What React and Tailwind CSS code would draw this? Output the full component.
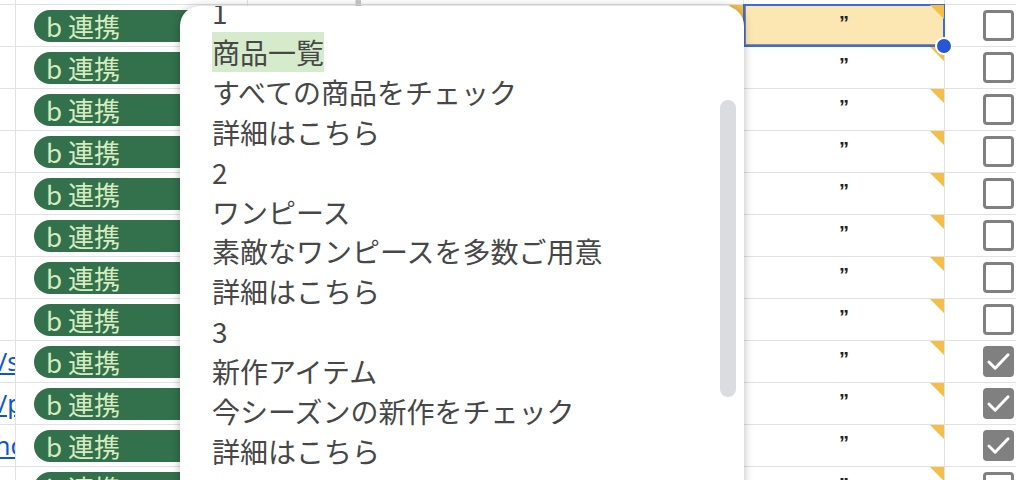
const ROW_COUNT = 12;
const CHECKED = [9, 10, 11];
const LINKS = { 9: ['/s', '-ml-[2px]'], 10: ['/p', '-ml-[2px]'], 11: ['nc', '-ml-[5px]'] };

const LINES = [
  '1',
  '商品一覧',
  'すべての商品をチェック',
  '詳細はこちら',
  '2',
  'ワンピース',
  '素敵なワンピースを多数ご用意',
  '詳細はこちら',
  '3',
  '新作アイテム',
  '今シーズンの新作をチェック',
  '詳細はこちら',
  '4',
];

function Corner() {
  return (
    <span className="absolute top-0 right-0 w-[14px] h-[14px] bg-[#f4be48] [clip-path:polygon(0_0,100%_0,100%_100%)]" />
  );
}

function Checkbox({ on }) {
  if (on) {
    return (
      <span className="flex items-center justify-center w-[31px] h-[31px] rounded-[4px] bg-[#808080]">
        <svg className="w-[27px] h-[27px] text-white" viewBox="0 0 24 24" fill="none" stroke="currentColor" strokeWidth={2.6}>
          <path strokeLinecap="round" strokeLinejoin="round" d="M3.5 12.5l5.5 5.5L20.5 6" />
        </svg>
      </span>
    );
  }
  return <span className="block w-[31px] h-[31px] rounded-[4px] border-[3px] border-[#808080] bg-white" />;
}

function Row({ idx }) {
  const link = LINKS[idx];
  return (
    <div className="flex h-[42px] border-b border-[#e2e2e2]">
      <div className="w-[16px] shrink-0 border-r border-[#e2e2e2] overflow-hidden flex items-center">
        {link && (
          <span className={`${link[1]} whitespace-nowrap text-[25px] text-[#1155cc] underline font-['Noto_Sans',sans-serif]`}>
            {link[0]}
          </span>
        )}
      </div>
      <div className="w-[232px] shrink-0 border-r border-[#e2e2e2] flex items-center pl-[18px]">
        <span className="flex items-center w-[205px] h-[32px] rounded-full bg-[#33704c] pl-[12px] text-[26px] leading-none text-[#d6ecc0]">
          b 連携
        </span>
      </div>
      <div className="w-[108px] shrink-0 border-r border-[#e2e2e2]" />
      <div className="w-[5px] shrink-0 bg-[#c8c8c8]" />
      <div className="relative w-[383px] shrink-0 border-r border-[#e2e2e2]">
        <Corner />
      </div>
      <div className="relative w-[201px] shrink-0 border-r border-[#e2e2e2] flex items-center justify-center">
        {idx === 1 && (
          <div className="absolute -top-[1px] -left-[1px] w-[202px] h-[43px] border-2 border-[#3a6ddb] bg-[#fce7b3] shadow-[inset_1px_-1px_0_#8c8c8c]">
            <span className="absolute -right-[10px] -bottom-[10px] w-[18px] h-[18px] rounded-full bg-[#2757d4] border-2 border-white z-10" />
          </div>
        )}
        <Corner />
        <span className="relative -mt-[6px] text-[20px] font-bold text-[#222] font-['Liberation_Sans',sans-serif]">”</span>
      </div>
      <div className="flex-1 flex items-center pl-[38px]">
        <Checkbox on={CHECKED.includes(idx)} />
      </div>
    </div>
  );
}

export default function App() {
  const rows = Array.from({ length: ROW_COUNT }, (_, i) => i + 1);
  return (
    <div className="relative w-[1016px] h-[480px] overflow-hidden bg-white font-['Noto_Sans_CJK_JP','Noto_Sans',sans-serif]">
      <div className="flex h-[5px] border-b border-[#e2e2e2]">
        <div className="w-[16px] shrink-0 border-r border-[#e2e2e2]" />
        <div className="w-[232px] shrink-0 border-r border-[#e2e2e2]" />
        <div className="w-[108px] shrink-0 border-r border-[#e2e2e2]" />
        <div className="w-[5px] shrink-0 bg-[#c8c8c8]" />
        <div className="w-[383px] shrink-0 border-r border-[#e2e2e2]" />
        <div className="w-[201px] shrink-0 border-r border-[#e2e2e2]" />
        <div className="flex-1" />
      </div>
      {rows.map((r) => (
        <Row key={r} idx={r} />
      ))}

      {/* dropdown preview popup */}
      <div className="absolute left-[180px] top-[6px] w-[564px] h-[520px] rounded-[20px] bg-white shadow-[0_1px_10px_rgba(0,0,0,0.28)] overflow-hidden">
        <div className="-mt-[13px] pl-[32px] text-[28px] leading-[39.9px] text-[#474747]">
          {LINES.map((t, i) => (
            <div key={i}>
              {i === 1 ? <span className="bg-[#d5ebcb]">{t}</span> : t}
            </div>
          ))}
        </div>
        <div className="absolute left-[540px] top-[94px] w-[16px] h-[297px] rounded-full bg-[#dadce0]" />
      </div>
    </div>
  );
}
